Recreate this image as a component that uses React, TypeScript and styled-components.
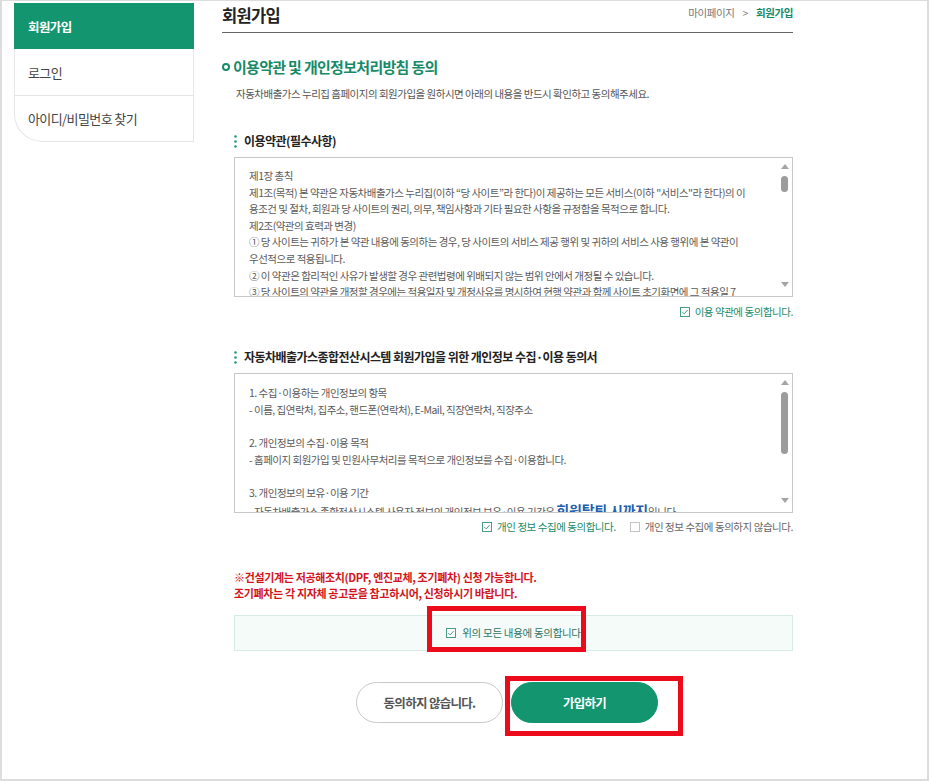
import React from "react";
import styled, { createGlobalStyle } from "styled-components";

const GREEN = "#13956f";
const TEAL = "#178a68";

const Global = createGlobalStyle`
  html, body { margin: 0; padding: 0; background: #fff; }
  body { font-family: "Noto Sans CJK KR", "Noto Sans", sans-serif; color: #555; }
  * { box-sizing: border-box; }
`;

const Frame = styled.div`
  width: 929px;
  height: 781px;
  border: 2px solid #dcdcdc;
  border-top-width: 1px;
  display: flex;
  align-items: flex-start;
  gap: 28px;
  padding: 2px 0 0 12px;
`;

const Sidebar = styled.nav`
  width: 180px;
  flex: none;
  display: flex;
  flex-direction: column;
`;

const SideHead = styled.div`
  height: 46px;
  background: ${GREEN};
  color: #fff;
  font-size: 12.5px;
  font-weight: 700;
  letter-spacing: -0.6px;
  display: flex;
  align-items: center;
  padding-left: 14px;
`;

const SideList = styled.div`
  border: 1px solid #e6e6e6;
  border-top: none;
  border-bottom-left-radius: 28px;
`;

const SideItem = styled.div<{ $h: number; $last?: boolean }>`
  height: ${(p) => p.$h}px;
  display: flex;
  align-items: center;
  padding-left: 13px;
  font-size: 13px;
  letter-spacing: -0.6px;
  color: #444;
  border-bottom: ${(p) => (p.$last ? "none" : "1px solid #e6e6e6")};
`;

const Main = styled.main`
  width: 571px;
  flex: none;
  display: flex;
  flex-direction: column;
`;

const Header = styled.header`
  height: 30px;
  border-bottom: 1px solid #666;
  display: flex;
  justify-content: space-between;
  align-items: flex-start;
`;

const PageTitle = styled.h1`
  margin: 0;
  font-size: 16.5px;
  font-weight: 700;
  line-height: 24px;
  letter-spacing: -0.7px;
  color: #222;
`;

const Crumb = styled.div`
  font-size: 10.5px;
  line-height: 20px;
  letter-spacing: -0.4px;
  color: #777;
  display: flex;
  gap: 8px;
`;

const CrumbNow = styled.span`
  color: ${TEAL};
  font-weight: 700;
`;

const SectionTitle = styled.h2`
  margin: 24px 0 0;
  display: flex;
  align-items: center;
  gap: 3px;
  font-size: 15px;
  font-weight: 700;
  line-height: 20px;
  letter-spacing: -0.7px;
  color: ${TEAL};
`;

const Ring = styled.span`
  width: 8px;
  height: 8px;
  border: 2px solid ${TEAL};
  border-radius: 50%;
  display: inline-block;
`;

const Desc = styled.p`
  margin: 9px 0 0 14px;
  font-size: 10.5px;
  line-height: 16px;
  letter-spacing: -0.5px;
  color: #555;
`;

const Block = styled.section`
  margin-left: 12px;
  width: 559px;
  display: flex;
  flex-direction: column;
`;

const SubTitle = styled.h3<{ $mt: number }>`
  margin: ${(p) => p.$mt}px 0 0;
  display: flex;
  align-items: center;
  gap: 7px;
  font-size: 12px;
  font-weight: 700;
  line-height: 16px;
  letter-spacing: -0.55px;
  color: #222;
`;

const Box = styled.div`
  margin-top: 8px;
  height: 140px;
  border: 1px solid #c8c8c8;
  display: flex;
`;

const BoxText = styled.div<{ $pt: number; $lh: number }>`
  flex: 1;
  overflow: hidden;
  padding: ${(p) => p.$pt}px 0 0 14px;
  font-size: 10.5px;
  line-height: ${(p) => p.$lh}px;
  letter-spacing: -0.5px;
  color: #5a5a5a;
  white-space: nowrap;
`;

const Line = styled.div``;

const Strong = styled.b`
  font-size: 14px;
  letter-spacing: -0.2px;
  color: #1f5fae;
`;

const Scroll = styled.div`
  width: 15px;
  flex: none;
  display: flex;
  flex-direction: column;
  align-items: center;
  padding: 6px 0 9px;
`;

const ArrowUp = styled.span`
  width: 0;
  height: 0;
  border-left: 4px solid transparent;
  border-right: 4px solid transparent;
  border-bottom: 5px solid #a5a5a5;
`;

const ArrowDown = styled.span`
  margin-top: auto;
  width: 0;
  height: 0;
  border-left: 4px solid transparent;
  border-right: 4px solid transparent;
  border-top: 5px solid #a5a5a5;
`;

const Thumb = styled.span<{ $h: number }>`
  margin-top: 7px;
  width: 7px;
  height: ${(p) => p.$h}px;
  border-radius: 4px;
  background: #9c9c9c;
`;

const AgreeRow = styled.div<{ $mt: number }>`
  margin-top: ${(p) => p.$mt}px;
  display: flex;
  justify-content: flex-end;
  gap: 14px;
  line-height: 16px;
`;

const CheckItem = styled.label<{ $on?: boolean }>`
  display: flex;
  align-items: center;
  gap: 5px;
  font-size: 10.5px;
  letter-spacing: -0.45px;
  color: ${(p) => (p.$on ? TEAL : "#666")};
`;

const Notice = styled.p`
  margin: 34px 0 0;
  font-size: 11px;
  font-weight: 700;
  line-height: 16px;
  letter-spacing: -0.35px;
  color: #d3141b;
`;

const AgreeAll = styled.div`
  margin-top: 14px;
  height: 36px;
  background: #f4fbf9;
  border: 1px solid #d7ece6;
  display: flex;
  justify-content: center;
  align-items: center;
`;

const AllLabel = styled.label`
  position: relative;
  display: flex;
  align-items: center;
  gap: 6px;
  font-size: 10.5px;
  line-height: 16px;
  letter-spacing: -0.3px;
  color: #2f7463;
`;

const Marker = styled.span<{ $t: number; $r: number; $b: number; $l: number }>`
  position: absolute;
  top: ${(p) => p.$t}px;
  right: ${(p) => p.$r}px;
  bottom: ${(p) => p.$b}px;
  left: ${(p) => p.$l}px;
  border: 5px solid #ec0b1b;
  pointer-events: none;
`;

const Buttons = styled.div`
  margin-top: 31px;
  display: flex;
  justify-content: center;
  gap: 8px;
  padding-right: 1px;
`;

const BtnWrap = styled.div`
  position: relative;
`;

const Btn = styled.button<{ $primary?: boolean }>`
  width: 147px;
  height: 41px;
  border-radius: 21px;
  border: 1px solid ${(p) => (p.$primary ? GREEN : "#c8c8c8")};
  background: ${(p) => (p.$primary ? GREEN : "#fff")};
  color: ${(p) => (p.$primary ? "#fff" : "#555")};
  font-family: inherit;
  font-size: 12.5px;
  font-weight: 700;
  letter-spacing: -0.7px;
  cursor: pointer;
`;

const Check = ({ on }: { on?: boolean }) => (
  <svg width="10" height="10" viewBox="0 0 10 10" aria-hidden>
    <rect x="0.5" y="0.5" width="9" height="9" fill="#fff" stroke={on ? "#4a9c85" : "#c4c4c4"} />
    {on && <path d="M2.4 5.1 L4.2 6.9 L7.6 3.1" fill="none" stroke="#4a9c85" strokeWidth="1" />}
  </svg>
);

const Dots = () => (
  <svg width="3" height="13" viewBox="0 0 3 13" aria-hidden>
    <circle cx="1.5" cy="1.5" r="1.3" fill="#2a9a7a" />
    <circle cx="1.5" cy="6.5" r="1.3" fill="#2a9a7a" />
    <circle cx="1.5" cy="11.5" r="1.3" fill="#2a9a7a" />
  </svg>
);

const terms = [
  "제1장 총칙",
  "제1조(목적) 본 약관은 자동차배출가스 누리집(이하 “당 사이트”라 한다)이 제공하는 모든 서비스(이하 \"서비스\"라 한다)의 이",
  "용조건 및 절차, 회원과 당 사이트의 권리, 의무, 책임사항과 기타 필요한 사항을 규정함을 목적으로 합니다.",
  "제2조(약관의 효력과 변경)",
  "① 당 사이트는 귀하가 본 약관 내용에 동의하는 경우, 당 사이트의 서비스 제공 행위 및 귀하의 서비스 사용 행위에 본 약관이",
  "우선적으로 적용됩니다.",
  "② 이 약관은 합리적인 사유가 발생할 경우 관련법령에 위배되지 않는 범위 안에서 개정될 수 있습니다.",
  "③ 당 사이트의 약관을 개정할 경우에는 적용일자 및 개정사유를 명시하여 현행 약관과 함께 사이트 초기화면에 그 적용일 7",
  "일 이전부터 적용일 전일까지 공지합니다.",
];

const privacy: React.ReactNode[] = [
  "1. 수집·이용하는 개인정보의 항목",
  "- 이름, 집연락처, 집주소, 핸드폰(연락처), E-Mail, 직장연락처, 직장주소",
  "\u00a0",
  "2. 개인정보의 수집·이용 목적",
  "- 홈페이지 회원가입 및 민원사무처리를 목적으로 개인정보를 수집·이용합니다.",
  "\u00a0",
  "3. 개인정보의 보유·이용 기간",
  <>
    - 자동차배출가스 종합전산시스템 사용자 정보의 개인정보 보유·이용 기간은 <Strong>회원탈퇴 시까지</Strong>입니다.
  </>,
];

export default function App() {
  return (
    <>
      <Global />
      <Frame>
        <Sidebar>
          <SideHead>회원가입</SideHead>
          <SideList>
            <SideItem $h={47}>로그인</SideItem>
            <SideItem $h={45} $last>아이디/비밀번호 찾기</SideItem>
          </SideList>
        </Sidebar>
        <Main>
          <Header>
            <PageTitle>회원가입</PageTitle>
            <Crumb>
              <span>마이페이지</span>
              <span>&gt;</span>
              <CrumbNow>회원가입</CrumbNow>
            </Crumb>
          </Header>
          <SectionTitle>
            <Ring />
            이용약관 및 개인정보처리방침 동의
          </SectionTitle>
          <Desc>자동차배출가스 누리집 홈페이지의 회원가입을 원하시면 아래의 내용을 반드시 확인하고 동의해주세요.</Desc>
          <Block>
            <SubTitle $mt={31}>
              <Dots />
              이용약관(필수사항)
            </SubTitle>
            <Box>
              <BoxText $pt={10} $lh={16.6}>
                {terms.map((t, i) => (
                  <Line key={i}>{t}</Line>
                ))}
              </BoxText>
              <Scroll>
                <ArrowUp />
                <Thumb $h={16} />
                <ArrowDown />
              </Scroll>
            </Box>
            <AgreeRow $mt={7}>
              <CheckItem $on>
                <Check on />
                이용 약관에 동의합니다.
              </CheckItem>
            </AgreeRow>
            <SubTitle $mt={29}>
              <Dots />
              자동차배출가스종합전산시스템 회원가입을 위한 개인정보 수집·이용 동의서
            </SubTitle>
            <Box>
              <BoxText $pt={11} $lh={16.67}>
                {privacy.map((t, i) => (
                  <Line key={i}>{t}</Line>
                ))}
              </BoxText>
              <Scroll>
                <ArrowUp />
                <Thumb $h={62} />
                <ArrowDown />
              </Scroll>
            </Box>
            <AgreeRow $mt={6}>
              <CheckItem $on>
                <Check on />
                개인 정보 수집에 동의합니다.
              </CheckItem>
              <CheckItem>
                <Check />
                개인 정보 수집에 동의하지 않습니다.
              </CheckItem>
            </AgreeRow>
            <Notice>
              ※건설기계는 저공해조치(DPF, 엔진교체, 조기폐차) 신청 가능합니다.
              <br />
              조기폐차는 각 지자체 공고문을 참고하시어, 신청하시기 바랍니다.
            </Notice>
            <AgreeAll>
              <AllLabel>
                <Check on />
                위의 모든 내용에 동의합니다
                <Marker $t={-19} $r={-5} $b={-11} $l={-19} />
              </AllLabel>
            </AgreeAll>
          </Block>
          <Buttons>
            <Btn type="button">동의하지 않습니다.</Btn>
            <BtnWrap>
              <Btn type="button" $primary>
                가입하기
              </Btn>
              <Marker $t={-6} $r={-25} $b={-13} $l={-6} />
            </BtnWrap>
          </Buttons>
        </Main>
      </Frame>
    </>
  );
}
